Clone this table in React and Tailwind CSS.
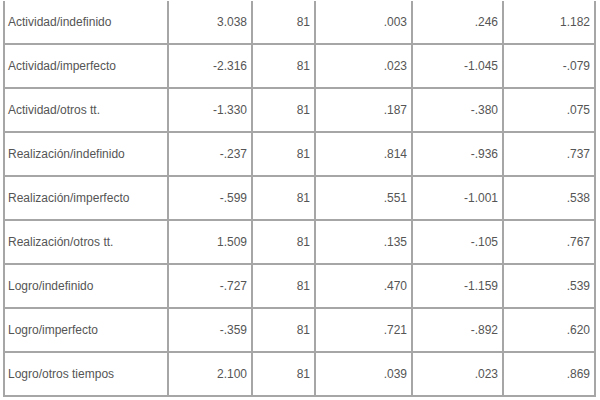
const rows = [
  ["Actividad/indefinido", "3.038", "81", ".003", ".246", "1.182"],
  ["Actividad/imperfecto", "-2.316", "81", ".023", "-1.045", "-.079"],
  ["Actividad/otros tt.", "-1.330", "81", ".187", "-.380", ".075"],
  ["Realización/indefinido", "-.237", "81", ".814", "-.936", ".737"],
  ["Realización/imperfecto", "-.599", "81", ".551", "-1.001", ".538"],
  ["Realización/otros tt.", "1.509", "81", ".135", "-.105", ".767"],
  ["Logro/indefinido", "-.727", "81", ".470", "-1.159", ".539"],
  ["Logro/imperfecto", "-.359", "81", ".721", "-.892", ".620"],
  ["Logro/otros tiempos", "2.100", "81", ".039", ".023", ".869"],
];

export default function App() {
  return (
    <div className="w-[600px] h-[400px] bg-white pt-px overflow-hidden" style={{ fontFamily: '"Liberation Sans", Arial, sans-serif' }}>
      <div className="ml-[3px] w-[593px] grid grid-cols-[164px_84px_63px_97px_91px_92px] border-l-2 border-[#a6a6a6] text-[12px] text-[#555555]">
        {rows.map((r, i) =>
          r.map((c, j) => (
            <div
              key={i + "-" + j}
              className={
                "h-[44px] flex items-center border-r-2 border-b-2 border-[#a6a6a6] " +
                (j === 0 ? "justify-start pl-[3px]" : "justify-end pr-[4px]")
              }
            >
              {c}
            </div>
          ))
        )}
      </div>
    </div>
  );
}
